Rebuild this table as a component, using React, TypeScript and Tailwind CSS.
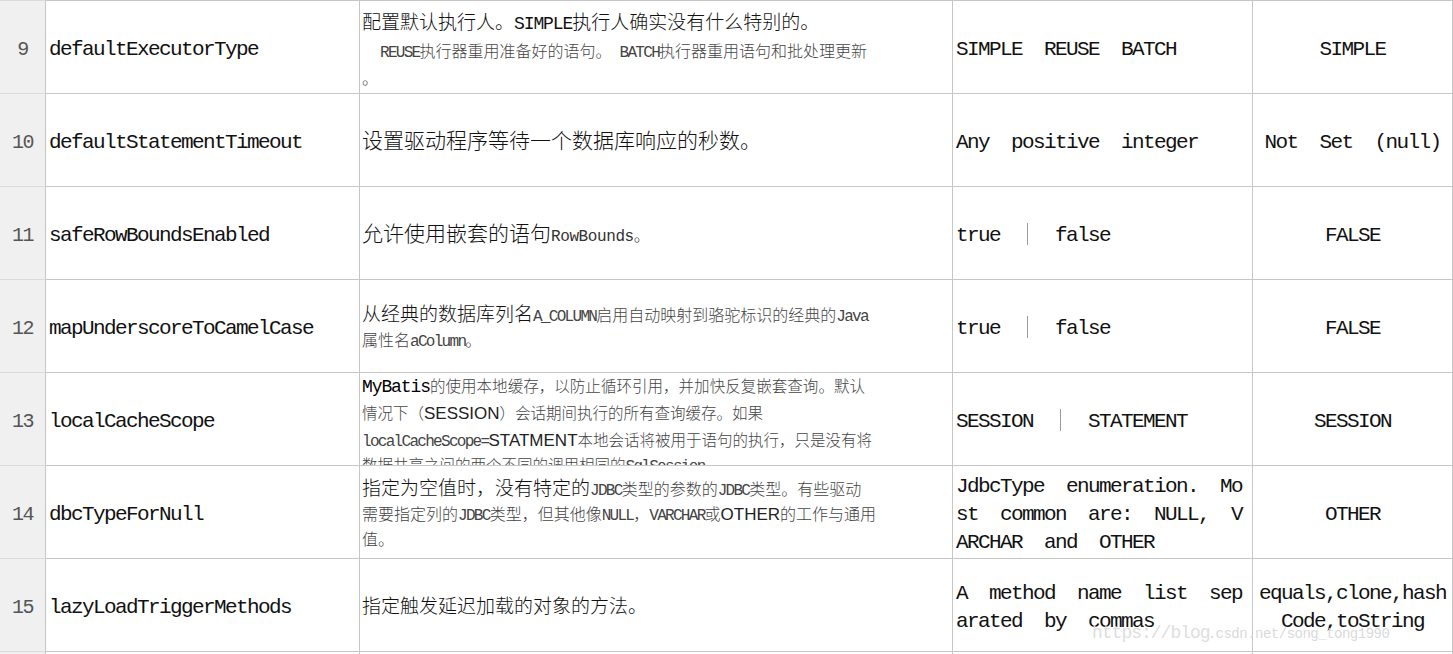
import React from "react";

// Latin runs inside the CJK description text
const L = ({ children }: { children: React.ReactNode }) => (
  <span className="text-[18px] tracking-[-1.1px]">{children}</span>
);
const S = ({ children }: { children: React.ReactNode }) => (
  <span className="text-[16px] tracking-[-1.7px]">{children}</span>
);
const A = ({ children }: { children: React.ReactNode }) => (
  <span className="font-['Liberation_Sans',sans-serif] text-[17px] text-[#222]">{children}</span>
);
const Sm = ({ children }: { children: React.ReactNode }) => (
  <span className="text-[16px] text-[#444]">{children}</span>
);
const Full = ({ children, w = "w-[503px]" }: { children: React.ReactNode; w?: string }) => (
  <div className={`${w} text-justify [text-align-last:justify]`}>{children}</div>
);

const Bar = () => (
  <span className="inline-flex w-[11px] h-[22px] justify-center align-middle -mt-[4px]">
    <span className="w-px h-full bg-[#9a9a9a]" />
  </span>
);

const Just = ({ words }: { words: string[] }) => (
  <div className="flex justify-between w-[286px] h-[28px] items-center">
    {words.map((w, i) => (
      <span key={i}>{w}</span>
    ))}
  </div>
);

type Row = {
  n: number;
  name: string;
  desc: React.ReactNode;
  descTop?: boolean;
  values: React.ReactNode;
  def: React.ReactNode;
};

const rows: Row[] = [
  {
    n: 9,
    name: "defaultExecutorType",
    descTop: true,
    desc: (
      <div className="pt-[9px]">
        <div className="leading-[28px]">
          配置默认执行人。<L>SIMPLE</L>执行人确实没有什么特别的。
        </div>
        <div className="pl-[18px] leading-[28px]">
          <Full w="w-[485px]">
            <Sm>
              <S>REUSE</S>执行器重用准备好的语句。　<S>BATCH</S>执行器重用语句和批处理更新
            </Sm>
          </Full>
        </div>
        <div className="leading-[24px]">
          <Sm>。</Sm>
        </div>
      </div>
    ),
    values: <span className="whitespace-pre">SIMPLE  REUSE  BATCH</span>,
    def: "SIMPLE",
  },
  {
    n: 10,
    name: "defaultStatementTimeout",
    desc: <div className="text-[21px]">设置驱动程序等待一个数据库响应的秒数。</div>,
    values: <span className="whitespace-pre">Any  positive  integer</span>,
    def: <span className="whitespace-pre">Not  Set  (null)</span>,
  },
  {
    n: 11,
    name: "safeRowBoundsEnabled",
    desc: (
      <div className="text-[21px]">
        允许使用嵌套的语句
        <span className="text-[16px] text-[#333]">
          <span className="tracking-[-0.4px]">RowBounds</span>。
        </span>
      </div>
    ),
    values: (
      <span className="whitespace-pre">
        true  <Bar />  false
      </span>
    ),
    def: "FALSE",
  },
  {
    n: 12,
    name: "mapUnderscoreToCamelCase",
    desc: (
      <div className="leading-[24px]">
        <Full>
          从经典的数据库列名
          <Sm>
            <S>A_COLUMN</S>启用自动映射到骆驼标识的经典的<S>Java</S>
          </Sm>
        </Full>
        <Sm>
          属性名<S>aColumn</S>。
        </Sm>
      </div>
    ),
    values: (
      <span className="whitespace-pre">
        true  <Bar />  false
      </span>
    ),
    def: "FALSE",
  },
  {
    n: 13,
    name: "localCacheScope",
    descTop: true,
    desc: (
      <div className="pt-[2px] leading-[25px] text-[#444] text-[15.5px]">
        <Full>
          <span className="text-black">
            <L>MyBatis</L>
          </span>
          的使用本地缓存，以防止循环引用，并加快反复嵌套查询。默认
        </Full>
        <div>
          情况下（<A>SESSION</A>）会话期间执行的所有查询缓存。如果
        </div>
        <Full>
          <S>localCacheScope=</S>
          <A>STATMENT</A>本地会话将被用于语句的执行，只是没有将
        </Full>
        <div>
          数据共享之间的两个不同的调用相同的<S>SqlSession</S>。
        </div>
      </div>
    ),
    values: (
      <span className="whitespace-pre">
        SESSION  <Bar />  STATEMENT
      </span>
    ),
    def: "SESSION",
  },
  {
    n: 14,
    name: "dbcTypeForNull",
    desc: (
      <div className="leading-[24px]">
        <Full w="w-[495px]">
          指定为空值时，没有特定的
          <Sm>
            <S>JDBC</S>类型的参数的<S>JDBC</S>类型。有些驱动
          </Sm>
        </Full>
        <Full>
          <Sm>
            需要指定列的<S>JDBC</S>类型，但其他像<S>NULL</S>，<S>VARCHAR</S>或<A>OTHER</A>的工作与通用
          </Sm>
        </Full>
        <Sm>值。</Sm>
      </div>
    ),
    values: (
      <div>
        <Just words={["JdbcType", "enumeration.", "Mo"]} />
        <Just words={["st", "common", "are:", "NULL,", "V"]} />
        <div className="h-[28px] flex items-center whitespace-pre">ARCHAR  and  OTHER</div>
      </div>
    ),
    def: "OTHER",
  },
  {
    n: 15,
    name: "lazyLoadTriggerMethods",
    desc: <div>指定触发延迟加载的对象的方法。</div>,
    values: (
      <div>
        <Just words={["A", "method", "name", "list", "sep"]} />
        <div className="h-[28px] flex items-center whitespace-pre">arated  by  commas</div>
      </div>
    ),
    def: (
      <div className="text-center">
        <div className="h-[28px] flex items-center justify-center">equals,clone,hash</div>
        <div className="h-[28px] flex items-center justify-center">Code,toString</div>
      </div>
    ),
  },
];

const cell = "border-t border-r border-[#c6c6c6] overflow-hidden";

export default function App() {
  return (
    <div
      lang="zh-CN"
      className="relative w-[1453px] h-[654px] overflow-hidden bg-white text-[#111] font-['Liberation_Mono','Noto_Sans_CJK_SC',monospace]"
    >
      {rows.map((r) => (
        <div key={r.n} className="flex h-[93px]">
          <div className="w-[46px] shrink-0 bg-[#f0f0f0] border-t border-[#dadada] border-r border-r-[#c6c6c6] flex items-center justify-center pt-[6px] text-[20px] tracking-[-1.5px] text-[#555]">
            {r.n}
          </div>
          <div className={`${cell} w-[314px] shrink-0 flex items-center pt-[6px] pl-[3px] text-[21px] tracking-[-1.6px] whitespace-nowrap`}>
            {r.name}
          </div>
          <div
            className={`${cell} w-[593px] shrink-0 flex pl-[2px] text-[19px] font-light whitespace-nowrap ${
              r.descTop ? "items-start" : "items-center pt-[6px]"
            }`}
          >
            {r.desc}
          </div>
          <div className={`${cell} w-[300px] shrink-0 flex items-center pt-[6px] pl-[3px] text-[21px] tracking-[-1.6px]`}>
            <div className="tracking-[-1.6px]">{r.values}</div>
          </div>
          <div className={`${cell} w-[200px] shrink-0 flex items-center justify-center pt-[6px] text-[21px] tracking-[-1.6px] whitespace-nowrap`}>
            {r.def}
          </div>
        </div>
      ))}
      <div className="flex h-[93px]">
        <div className="w-[46px] shrink-0 bg-[#f0f0f0] border-t border-[#dadada] border-r border-r-[#c6c6c6]" />
        <div className={`${cell} w-[314px] shrink-0`} />
        <div className={`${cell} w-[593px] shrink-0`} />
        <div className={`${cell} w-[300px] shrink-0`} />
        <div className={`${cell} w-[200px] shrink-0`} />
      </div>

      {/* watermark */}
      <div className="absolute left-[1092px] top-[622px] flex items-end whitespace-nowrap text-[#dedede] pointer-events-none">
        <span className="text-[18px] tracking-[-1px] leading-[22px]">https://blog</span>
        <span className="text-[14px] tracking-[-0.5px] leading-[20px] -ml-[2px] text-[#dadada]">.csdn.net/song_tong1990</span>
      </div>
    </div>
  );
}
